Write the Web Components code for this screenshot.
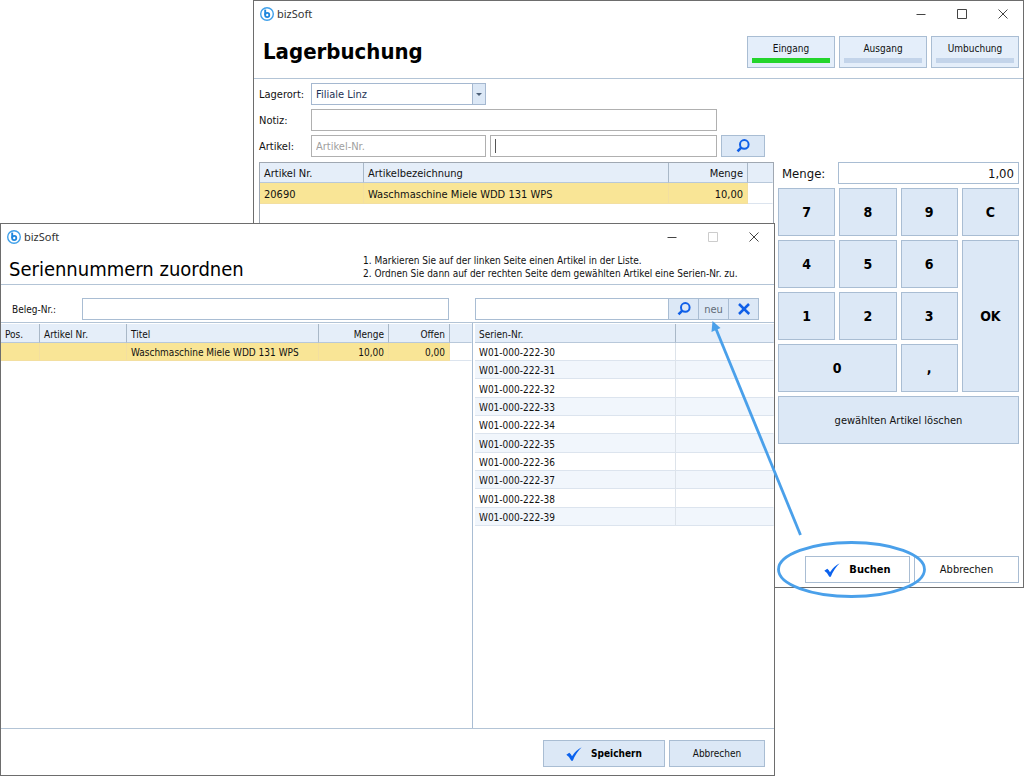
<!DOCTYPE html>
<html lang="de">
<head>
<meta charset="utf-8">
<title>bizSoft</title>
<style>
  html, body {
    height: 100%;
    margin: 0;
  }
  body {
    font-family: "DejaVu Sans Condensed", "Noto Sans", sans-serif;
    font-size: 11px;
    color: #111;
    background: #fff;
    overflow: hidden;
  }
</style>
</head>
<body>
<biz-desktop></biz-desktop>

<script>
const ICONS = {
  logo: `<svg viewBox="0 0 14 14"><circle cx="7" cy="7" r="6.3" fill="#fff" stroke="#3fa0ea" stroke-width="1.4"/><path d="M5.2 2.6V8" stroke="#1d86dd" stroke-width="1.9" fill="none"/><circle cx="7.2" cy="8" r="2.1" stroke="#1d86dd" stroke-width="1.8" fill="none"/></svg>`,
  min: `<svg viewBox="0 0 10 10"><path d="M.5 5.5h9" stroke="#444"/></svg>`,
  max: `<svg viewBox="0 0 10 10"><path d="M.5.5h9v9h-9z" fill="none" stroke="currentColor"/></svg>`,
  close: `<svg viewBox="0 0 10 10"><path d="M.5.5l9 9M9.500.5l-9 9" stroke="#444" fill="none"/></svg>`,
  search: `<svg viewBox="0 0 14 14"><circle cx="8.300" cy="5.400" r="4.300" fill="none" stroke="#0f5fe8" stroke-width="2"/><path d="M5.600 8.300L1.500 12.400" stroke="#0f5fe8" stroke-width="2.600"/></svg>`,
  cross: `<svg viewBox="0 0 14 14"><path d="M2 2L12.200 12M12 2L2 12" stroke="#0f5fe8" stroke-width="2.500" fill="none"/></svg>`,
  check: `<svg viewBox="0 0 16 14"><path d="M.3 7.800L3.300 5.800Q5 7.200 6 9.200Q9.500 3.500 15.700.3Q9.800 6 6.800 13.700H5.300Q3.300 9.500.3 7.800z" fill="#0b62ee"/></svg>`
};

const define = (name, html, setup) => {
  const template = document.createElement("template");
  template.innerHTML = html;
  customElements.define(name, class extends HTMLElement {
    constructor() {
      super();
      this.attachShadow({ mode: "open" });
      this.shadowRoot.appendChild(template.content.cloneNode(true));
    }
    connectedCallback() {
      if (setup) setup(this, this.shadowRoot);
    }
  });
};

define("biz-icon", `
  <style>
    :host { display: inline-block; width: 14px; height: 14px; flex: none; }
    :host([name="check"]) { width: 16px; }
    svg { display: block; width: 100%; height: 100%; }
  </style>
  <span></span>
`, (host, root) => {
  root.querySelector("span").innerHTML = ICONS[host.getAttribute("name")];
});

define("biz-button", `
  <style>
    :host { display: block; }
    button {
      display: flex;
      align-items: center;
      justify-content: center;
      gap: 9px;
      box-sizing: border-box;
      width: 100%;
      height: 100%;
      padding: 0;
      font: inherit;
      color: inherit;
      background: var(--face, #dce8f6);
      border: 1px solid #a9bdd3;
      border-radius: 0;
    }
    :host([key]) button { font-weight: bold; font-size: 14px; color: #000; }
    :host([primary]) button { font-weight: bold; color: #000; }
  </style>
  <button type="button"><slot></slot></button>
`, (host, root) => {
  const label = host.getAttribute("label");
  if (label) root.querySelector("button").setAttribute("aria-label", label);
});

define("mode-button", `
  <style>
    :host { display: block; width: 88px; }
    button {
      display: flex;
      flex-direction: column;
      justify-content: space-between;
      box-sizing: border-box;
      width: 100%;
      height: 32px;
      padding: 4px;
      font: inherit;
      font-size: 10px;
      line-height: 15px;
      color: inherit;
      background: #e4eefa;
      border: 1px solid #a9bdd3;
    }
    span { width: 100%; text-align: center; }
    i { display: block; width: 100%; height: 5px; background: #c3d4ea; }
    :host([active]) i { background: #23d42b; }
  </style>
  <button type="button"><span><slot></slot></span><i></i></button>
`);

define("biz-window", `
  <style>
    :host {
      display: flex;
      flex-direction: column;
      box-sizing: border-box;
      background: #fff;
      border: 1px solid #6d6d6d;
    }
    .titlebar {
      display: flex;
      align-items: center;
      height: 25px;
      padding: 0 15px 0 6px;
      font-family: "Noto Sans", sans-serif;
      font-size: 11px;
      color: #333;
    }
    .titlebar biz-icon { margin-right: 3px; }
    .controls { display: flex; gap: 31px; margin-left: auto; }
    .controls button {
      display: block;
      padding: 0;
      border: 0;
      background: none;
      color: #444;
    }
    .controls biz-icon { display: block; width: 10px; height: 10px; margin: 0; }
    .controls button:disabled { color: #ccc; }
    header {
      display: flex;
      align-items: center;
      justify-content: space-between;
      border-bottom: 1px solid #b3c4d6;
    }
    main { display: flex; flex-direction: column; flex: 1; min-height: 0; }
  </style>
  <div class="titlebar">
    <biz-icon name="logo"></biz-icon>bizSoft
    <div class="controls">
      <button type="button" aria-label="Minimieren"><biz-icon name="min"></biz-icon></button>
      <button type="button" class="max" aria-label="Maximieren"><biz-icon name="max"></biz-icon></button>
      <button type="button" aria-label="Schließen"><biz-icon name="close"></biz-icon></button>
    </div>
  </div>
  <header part="header"><slot name="header"></slot></header>
  <main><slot></slot></main>
`, (host, root) => {
  root.querySelector(".max").disabled = host.hasAttribute("fixed");
});

define("data-grid", `
  <style>
    :host { display: block; overflow: hidden; }
    table {
      width: 100%;
      table-layout: fixed;
      border-collapse: separate;
      border-spacing: 0;
    }
    th, td {
      box-sizing: border-box;
      height: var(--row, 18px);
      padding: 2px 4px 0;
      line-height: 15px;
      text-align: left;
      font-weight: normal;
      white-space: nowrap;
    }
    th {
      height: var(--head, 19px);
      background: #e5eef9;
      border-right: 1px solid #a9b8c8;
      border-bottom: 1px solid #b8c8da;
    }
    td {
      border-right: 1px solid #dde3ea;
      border-bottom: 1px solid #dce4ee;
    }
    th:last-child, td:last-child { border-right-color: transparent; }
    .num { text-align: right; }
    .selected td:not(:last-child) { background: #f9e596; border-color: #f3dfa0; }
    :host([striped]) tr:nth-child(even) td { background: #f1f6fc; }
    :host([striped]) tr:nth-child(3n) td { height: 19px; }
  </style>
  <table>
    <colgroup></colgroup>
    <thead><tr></tr></thead>
    <tbody></tbody>
  </table>
`, (host, root) => {
  const columns = JSON.parse(host.getAttribute("columns"));
  const rows = JSON.parse(host.getAttribute("rows"));
  const cell = (tag, text, col) => `<${tag} class="${col.num ? "num" : ""}">${text}</${tag}>`;
  const selected = host.hasAttribute("striped") ? "" : "selected";

  root.querySelector("colgroup").innerHTML = columns
    .map((col) => `<col${col.width ? ` style="width:${col.width}px"` : ""}>`).join("");
  root.querySelector("thead tr").innerHTML = columns
    .map((col) => cell("th", col.title, col)).join("");
  root.querySelector("tbody").innerHTML = rows
    .map((row) => `<tr class="${selected}">${columns.map((col, i) => cell("td", row[i] || "", col)).join("")}</tr>`)
    .join("");
});

define("stock-form", `
  <style>
    :host {
      display: grid;
      grid-template-columns: 48px 175px 227px 44px;
      grid-auto-rows: 22px;
      gap: 4px;
      align-items: center;
      padding: 4px 5px 5px;
    }
    label { grid-column: 1; white-space: nowrap; }
    input, select {
      box-sizing: border-box;
      width: 100%;
      height: 22px;
      padding: 0 4px;
      font: inherit;
      color: inherit;
      background: #fff;
      border: 1px solid #b0b0b0;
      border-radius: 0;
      outline: 0;
    }
    input::placeholder { color: #a0a0a0; }
    .combo { position: relative; height: 22px; }
    select { appearance: none; border-color: #a5b8d0; color: #1e3356; }
    .combo::before {
      content: "";
      position: absolute;
      right: 1px;
      top: 1px;
      width: 12px;
      height: 20px;
      background: #dce8f6;
      border-left: 1px solid #a5b8d0;
      pointer-events: none;
    }
    .combo::after {
      content: "";
      position: absolute;
      right: 4px;
      top: 10px;
      border: 3px solid transparent;
      border-top-color: #4d6078;
      border-bottom: 0;
      pointer-events: none;
    }
    .note { grid-column: 2 / 4; }
    .caret { background: linear-gradient(#555, #555) 4px center / 1px 14px no-repeat #fff; }
    biz-button { height: 22px; }
  </style>
  <label for="place">Lagerort:</label>
  <div class="combo"><select id="place"><option>Filiale Linz</option></select></div>
  <label for="note">Notiz:</label>
  <input id="note" class="note" type="text">
  <label for="article">Artikel:</label>
  <input id="article" type="text" placeholder="Artikel-Nr.">
  <input class="caret" type="text" aria-label="Artikelbezeichnung">
  <biz-button label="Suchen"><biz-icon name="search"></biz-icon></biz-button>
`);

define("num-pad", `
  <style>
    :host { display: flex; flex-direction: column; gap: 4px; }
    .amount { display: flex; align-items: center; font-size: 13px; }
    label { flex: 1; padding-left: 4px; }
    input {
      box-sizing: border-box;
      width: 75%;
      height: 22px;
      padding: 0 4px;
      font: inherit;
      color: inherit;
      text-align: right;
      border: 1px solid #a9bdd3;
    }
    .keys {
      display: grid;
      grid-template-columns: repeat(4, 1fr);
      grid-auto-rows: 48px;
      gap: 4px;
    }
    .ok { grid-area: 2 / 4 / 5 / 5; }
    .zero { grid-column: span 2; }
    .delete { grid-column: 1 / -1; }
  </style>
  <div class="amount">
    <label for="amount">Menge:</label>
    <input id="amount" type="text" value="1,00">
  </div>
  <div class="keys">
    <biz-button key>7</biz-button>
    <biz-button key>8</biz-button>
    <biz-button key>9</biz-button>
    <biz-button key>C</biz-button>
    <biz-button key>4</biz-button>
    <biz-button key>5</biz-button>
    <biz-button key>6</biz-button>
    <biz-button key class="ok">OK</biz-button>
    <biz-button key>1</biz-button>
    <biz-button key>2</biz-button>
    <biz-button key>3</biz-button>
    <biz-button key class="zero">0</biz-button>
    <biz-button key>,</biz-button>
    <biz-button class="delete">gewählten Artikel löschen</biz-button>
  </div>
`);

define("stock-window", `
  <style>
    :host { display: block; }
    biz-window { height: 100%; }
    biz-window::part(header) { height: 52px; padding: 0 4px 0 9px; }
    h1 { margin: 0; font-size: 22px; line-height: 28px; color: #000; }
    .modes { display: flex; gap: 4px; }
    .work { display: grid; grid-template-columns: 1fr 241px; gap: 4px; flex: 1; padding: 0 4px 0 5px; }
    data-grid {
      --head: 20px;
      --row: 21px;
      border: 1px solid #a0a8b2;
      border-bottom: 0;
    }
    footer { display: flex; justify-content: flex-end; gap: 4px; padding: 4px; --face: #fff; }
    footer biz-button { width: 105px; height: 27px; }
  </style>
  <biz-window>
    <h1 slot="header">Lagerbuchung</h1>
    <div slot="header" class="modes">
      <mode-button active>Eingang</mode-button>
      <mode-button>Ausgang</mode-button>
      <mode-button>Umbuchung</mode-button>
    </div>
    <stock-form></stock-form>
    <div class="work">
      <data-grid
        columns='[{"title":"Artikel Nr.","width":104},{"title":"Artikelbezeichnung"},{"title":"Menge","width":79,"num":true},{"title":"","width":25}]'
        rows='[["20690","Waschmaschine Miele WDD 131 WPS","10,00"]]'></data-grid>
      <num-pad></num-pad>
    </div>
    <footer>
      <biz-button primary><biz-icon name="check"></biz-icon>Buchen</biz-button>
      <biz-button>Abbrechen</biz-button>
    </footer>
  </biz-window>
`);

define("serial-window", `
  <style>
    :host { display: block; font-size: 10px; }
    biz-window { height: 100%; }
    biz-window::part(header) { height: 35px; padding: 0 25px 0 8px; }
    h1 { margin: 0; padding-top: 4px; font-size: 20px; font-weight: normal; line-height: 28px; color: #000; }
    .hints { flex: 0 0 386px; }
    p { margin: 0; line-height: 13px; }
    .tools, .panes { display: grid; grid-template-columns: 471px 1fr; }
    .tools { padding: 13px 0 2px; border-bottom: 1px solid #b3c4d6; }
    .receipt { display: flex; align-items: center; padding: 0 23px 0 11px; }
    .receipt label { width: 70px; }
    .serial { display: flex; padding: 0 15px 0 3px; }
    input {
      flex: 1;
      box-sizing: border-box;
      min-width: 0;
      height: 22px;
      padding: 0 4px;
      font: inherit;
      border: 1px solid #a9bdd3;
    }
    .serial input { border-right: 0; }
    .serial biz-button { width: 31px; height: 22px; font-size: 11px; color: #626b76; }
    .serial biz-button + biz-button { margin-left: -1px; }
    .panes { flex: 1; border-bottom: 1px solid #b3c4d6; }
    data-grid { padding-top: 1px; }
    .right { padding-left: 2px; border-left: 1px solid #a9bdd3; }
    footer { display: flex; justify-content: flex-end; gap: 4px; padding: 11px 9px 8px; }
    footer biz-button { width: 96px; height: 27px; }
    footer biz-button[primary] { width: 122px; }
  </style>
  <biz-window fixed>
    <h1 slot="header">Seriennummern zuordnen</h1>
    <div slot="header" class="hints">
      <p>1. Markieren Sie auf der linken Seite einen Artikel in der Liste.</p>
      <p>2. Ordnen Sie dann auf der rechten Seite dem gewählten Artikel eine Serien-Nr. zu.</p>
    </div>
    <div class="tools">
      <div class="receipt">
        <label for="receipt">Beleg-Nr.:</label>
        <input id="receipt" type="text">
      </div>
      <div class="serial">
        <input type="text" aria-label="Serien-Nr.">
        <biz-button label="Suchen"><biz-icon name="search"></biz-icon></biz-button>
        <biz-button>neu</biz-button>
        <biz-button label="Entfernen"><biz-icon name="cross"></biz-icon></biz-button>
      </div>
    </div>
    <div class="panes">
      <data-grid
        columns='[{"title":"Pos.","width":39},{"title":"Artikel Nr.","width":87},{"title":"Titel"},{"title":"Menge","width":70,"num":true},{"title":"Offen","width":61,"num":true},{"title":"","width":22}]'
        rows='[["","","Waschmaschine Miele WDD 131 WPS","10,00","0,00"]]'></data-grid>
      <data-grid striped class="right"
        columns='[{"title":"Serien-Nr.","width":201},{"title":""}]'
        rows='[["W01-000-222-30"],["W01-000-222-31"],["W01-000-222-32"],["W01-000-222-33"],["W01-000-222-34"],["W01-000-222-35"],["W01-000-222-36"],["W01-000-222-37"],["W01-000-222-38"],["W01-000-222-39"]]'></data-grid>
    </div>
    <footer>
      <biz-button primary><biz-icon name="check"></biz-icon>Speichern</biz-button>
      <biz-button>Abbrechen</biz-button>
    </footer>
  </biz-window>
`);

define("biz-desktop", `
  <style>
    :host { display: block; position: relative; height: 100%; }
    stock-window { position: absolute; inset: 0 0 188px 253px; }
    serial-window { position: absolute; inset: 223px 249px 0 0; }
    svg { position: absolute; left: 0; top: 0; pointer-events: none; }
  </style>
  <stock-window></stock-window>
  <serial-window></serial-window>
  <!-- arrow from "Buchen" to "neu" -->
  <svg width="1024" height="776" viewBox="0 0 1024 776" fill="none" stroke="#4aa0ea">
    <ellipse cx="851.500" cy="569.500" rx="73" ry="27" stroke-width="2.800"/>
    <path d="M800.500 535L716 329" stroke-width="2.800"/>
    <path d="M712.500 321L711.500 332L720.500 328z" fill="#4aa0ea" stroke="none"/>
  </svg>
`);
</script>
</body>
</html>
